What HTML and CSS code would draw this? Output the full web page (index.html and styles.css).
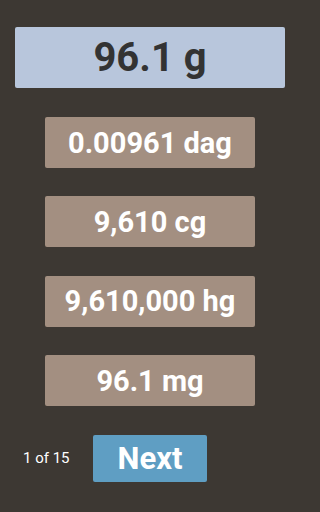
FILE: index.html
```html
<!DOCTYPE html>
<html>
<head>
<meta charset="utf-8">
<link rel="stylesheet" href="styles.css">
</head>
<body>
<div class="screen">
  <div class="main-value">96.1 g</div>
  <div class="options">
    <div class="option">0.00961 dag</div>
    <div class="option">9,610 cg</div>
    <div class="option">9,610,000 hg</div>
    <div class="option">96.1 mg</div>
  </div>
  <div class="footer">
    <div class="counter">1 of 15</div>
    <div class="next">Next</div>
  </div>
</div>
</body>
</html>
```
FILE: styles.css
```css
html, body {
  margin: 0;
  padding: 0;
  background: #3d3833;
}
.screen {
  width: 300px;
  height: 512px;
  box-sizing: border-box;
  padding-top: 27px;
  font-family: Roboto, "Liberation Sans", sans-serif;
  display: flex;
  flex-direction: column;
  align-items: center;
}
.main-value {
  width: 270px;
  height: 61px;
  background: #b8c6dc;
  border-radius: 2px;
  color: #333333;
  font-weight: 700;
  font-size: 40px;
  display: flex;
  align-items: center;
  justify-content: center;
}
.options {
  margin-top: 29px;
  display: flex;
  flex-direction: column;
  gap: 28.4px;
}
.option {
  width: 210px;
  height: 51px;
  background: #a38f81;
  border-radius: 2px;
  color: #ffffff;
  font-weight: 700;
  font-size: 29px;
  display: flex;
  align-items: center;
  justify-content: center;
}
.footer {
  margin-top: 28.5px;
  width: 300px;
  display: flex;
  align-items: center;
}
.counter {
  flex: 0 0 93px;
  box-sizing: border-box;
  padding-left: 23px;
  color: #ffffff;
  font-size: 15px;
}
.next {
  width: 114px;
  height: 47px;
  background: #5f9ec3;
  border-radius: 2px;
  color: #ffffff;
  font-weight: 700;
  font-size: 31px;
  display: flex;
  align-items: center;
  justify-content: center;
}
```
